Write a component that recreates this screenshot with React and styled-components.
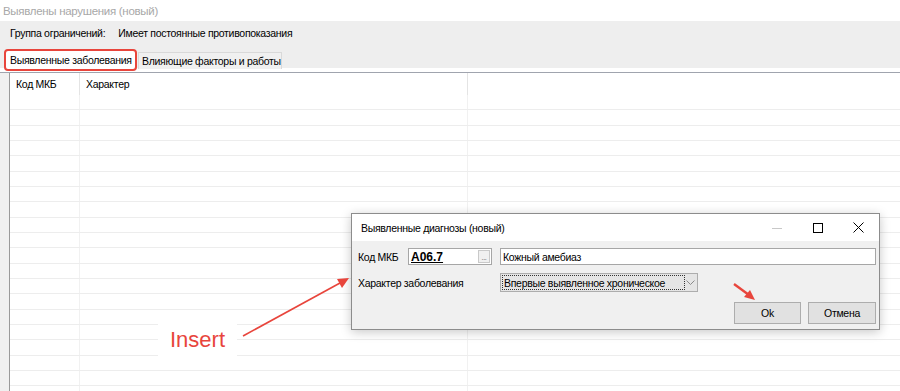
import React from "react";
import styled, { createGlobalStyle } from "styled-components";

const GlobalStyle = createGlobalStyle`
  body {
    margin: 0;
    background: #fff;
    font-family: "Liberation Sans", Arial, sans-serif;
  }
`;

const RED = "#e8453c";

const Page = styled.div`
  position: relative;
  width: 900px;
  height: 391px;
  overflow: hidden;
  display: flex;
  flex-direction: column;
  background: #f0f0f0;
  font-size: 10.5px;
  letter-spacing: -0.3px;
  color: #000;
`;

const WindowTitle = styled.div`
  flex: none;
  height: 21px;
  padding-left: 3px;
  line-height: 23px;
  background: #fff;
  color: #a8a8a8;
  font-size: 11.5px;
`;

const GroupRow = styled.div`
  flex: none;
  height: 23px;
  display: flex;
  align-items: center;
  padding-left: 10px;
  background: #eeeeee;
  span + span {
    margin-left: 13px;
  }
`;

const TabStrip = styled.div`
  flex: none;
  height: 28px;
  display: flex;
  align-items: flex-end;
  padding-left: 4px;
  background: linear-gradient(to bottom, #eeeeee 24px, #fff 24px);
`;

const Tab = styled.div`
  box-sizing: border-box;
  display: flex;
  align-items: center;
  white-space: nowrap;
  ${(p) =>
    p.$active
      ? `
    width: 133px;
    height: 22px;
    margin-bottom: 1px;
    padding-left: 4px;
    background: #fff;
    border: 2px solid ${RED};
    border-radius: 4px;
  `
      : `
    width: 144px;
    height: 17px;
    margin: 0 0 3px 1px;
    padding-left: 3px;
    background: #f0f0f0;
    border: 1px solid #d9d9d9;
    border-bottom: none;
  `}
`;

const TabBody = styled.div`
  flex: 1;
  display: flex;
  padding-left: 9px;
  border-top: 1px solid #a0a4ae;
`;

const Grid = styled.div`
  flex: 1;
  background: #fff;
  border-left: 1px solid #9a9a9a;
`;

const GridRow = styled.div`
  box-sizing: border-box;
  display: grid;
  grid-template-columns: 70px 388px 1fr;
  height: ${(p) => (p.$head ? "22px" : "15.33px")};
  border-bottom: ${(p) => (p.$head ? "none" : "1px solid #ededed")};
`;

const Cell = styled.div`
  display: flex;
  align-items: center;
  padding-left: 6px;
  border-right: 1px solid ${(p) => (p.$head ? "#e4e4e4" : "#f1f1f1")};
  &:last-child {
    border-right: none;
  }
`;

/* ---------- dialog window ---------- */

const Dialog = styled.div`
  position: absolute;
  left: 351px;
  top: 213px;
  width: 529px;
  height: 117px;
  box-sizing: border-box;
  display: flex;
  flex-direction: column;
  background: #f0f0f0;
  border: 1px solid #8c8c8c;
  box-shadow: 0 2px 10px rgba(0, 0, 0, 0.22);
`;

const DialogTitle = styled.div`
  flex: none;
  height: 27px;
  display: flex;
  align-items: center;
  background: #fff;
  padding-left: 9px;
`;

const TitleText = styled.div`
  flex: 1;
`;

const CaptionButton = styled.div`
  width: 41px;
  height: 27px;
  display: flex;
  align-items: center;
  justify-content: center;
`;

const DialogBody = styled.div`
  flex: 1;
  display: flex;
  flex-direction: column;
  padding: 7px 3px 0 6px;
`;

const FormRow = styled.div`
  display: flex;
  align-items: center;
  margin-bottom: ${(p) => p.$gap || 0}px;
`;

const Label = styled.div`
  flex: none;
  width: ${(p) => p.$width}px;
`;

const TextBox = styled.div`
  box-sizing: border-box;
  width: ${(p) => p.$width}px;
  height: 17px;
  display: flex;
  align-items: center;
  padding-left: 2px;
  margin-left: ${(p) => p.$ml || 0}px;
  background: #fff;
  border: 1px solid #a6a6a6;
`;

const CodeValue = styled.span`
  flex: 1;
  font-weight: bold;
  font-size: 12px;
  letter-spacing: 0;
  text-decoration: underline;
`;

const EllipsisButton = styled.div`
  box-sizing: border-box;
  width: 12px;
  height: 13px;
  margin-right: 1px;
  background: #f0f0f0;
  border: 1px solid #c9c9c9;
  font-size: 7px;
  line-height: 13px;
  text-align: center;
  color: #555;
`;

const Combo = styled.div`
  box-sizing: border-box;
  width: 198px;
  height: 19px;
  display: flex;
  align-items: center;
  padding: 0 1px;
  background: #e5e5e5;
  border: 1px solid #adadad;
`;

const FocusBox = styled.div`
  box-sizing: border-box;
  width: 183px;
  height: 15px;
  display: flex;
  align-items: center;
  padding-left: 1px;
  border: 1px dotted #333;
  white-space: nowrap;
`;

const ChevronBox = styled.div`
  flex: 1;
  display: flex;
  justify-content: center;
`;

const ButtonRow = styled.div`
  display: flex;
  justify-content: flex-end;
  gap: 7px;
  margin-top: 10px;
`;

const Button = styled.div`
  box-sizing: border-box;
  width: ${(p) => p.$width}px;
  height: 22px;
  display: flex;
  align-items: center;
  justify-content: center;
  background: #e1e1e1;
  border: 1px solid #adadad;
`;

/* ---------- annotations ---------- */

const Overlay = styled.svg`
  position: absolute;
  left: 0;
  top: 0;
  pointer-events: none;
`;

const InsertLabel = styled.div`
  position: absolute;
  left: 158px;
  top: 323px;
  width: 79px;
  height: 34px;
  display: flex;
  align-items: center;
  justify-content: center;
  background: #fff;
  color: ${RED};
  font-size: 22px;
  letter-spacing: 0;
`;

const ROWS = 20;

export default function App() {
  return (
    <>
      <GlobalStyle />
      <Page>
        <WindowTitle>Выявлены нарушения (новый)</WindowTitle>
        <GroupRow>
          <span>Группа ограничений:</span>
          <span>Имеет постоянные противопоказания</span>
        </GroupRow>
        <TabStrip>
          <Tab $active>Выявленные заболевания</Tab>
          <Tab>Влияющие факторы и работы</Tab>
        </TabStrip>
        <TabBody>
          <Grid>
            <GridRow $head>
              <Cell $head>Код МКБ</Cell>
              <Cell $head>Характер</Cell>
              <Cell $head />
            </GridRow>
            {Array.from({ length: ROWS }).map((_, i) => (
              <GridRow key={i}>
                <Cell />
                <Cell />
                <Cell />
              </GridRow>
            ))}
          </Grid>
        </TabBody>

        <Dialog>
          <DialogTitle>
            <TitleText>Выявленные диагнозы (новый)</TitleText>
            <CaptionButton>
              <svg width="10" height="10" viewBox="0 0 10 10">
                <path d="M0 5.5h10" stroke="#c8c8c8" strokeWidth="1" />
              </svg>
            </CaptionButton>
            <CaptionButton>
              <svg width="10" height="10" viewBox="0 0 10 10">
                <rect x="0.5" y="0.5" width="9" height="9" fill="none" stroke="#000" strokeWidth="1" />
              </svg>
            </CaptionButton>
            <CaptionButton>
              <svg width="11" height="11" viewBox="0 0 11 11">
                <path d="M0.5 0.5l10 10M10.5 0.5l-10 10" stroke="#000" strokeWidth="1" />
              </svg>
            </CaptionButton>
          </DialogTitle>
          <DialogBody>
            <FormRow $gap={8}>
              <Label $width={50}>Код МКБ</Label>
              <TextBox $width={84}>
                <CodeValue>A06.7</CodeValue>
                <EllipsisButton>...</EllipsisButton>
              </TextBox>
              <TextBox $width={376} $ml={8}>Кожный амебиаз</TextBox>
            </FormRow>
            <FormRow>
              <Label $width={142}>Характер заболевания</Label>
              <Combo>
                <FocusBox>Впервые выявленное хроническое</FocusBox>
                <ChevronBox>
                  <svg width="9" height="5" viewBox="0 0 9 5">
                    <path d="M0.5 0.5l4 4 4-4" fill="none" stroke="#8a8a8a" strokeWidth="1" />
                  </svg>
                </ChevronBox>
              </Combo>
            </FormRow>
            <ButtonRow>
              <Button $width={67}>Ok</Button>
              <Button $width={68}>Отмена</Button>
            </ButtonRow>
          </DialogBody>
        </Dialog>

        <InsertLabel>Insert</InsertLabel>
        <Overlay width="900" height="391" viewBox="0 0 900 391">
          <line x1="243" y1="336" x2="340" y2="283" stroke={RED} strokeWidth="1.6" />
          <path d="M349 278 L337 279 L342 288 Z" fill={RED} />
          <line x1="734" y1="284" x2="749" y2="295" stroke={RED} strokeWidth="2.4" />
          <path d="M755 300 L744 297 L750 290 Z" fill={RED} />
        </Overlay>
      </Page>
    </>
  );
}
